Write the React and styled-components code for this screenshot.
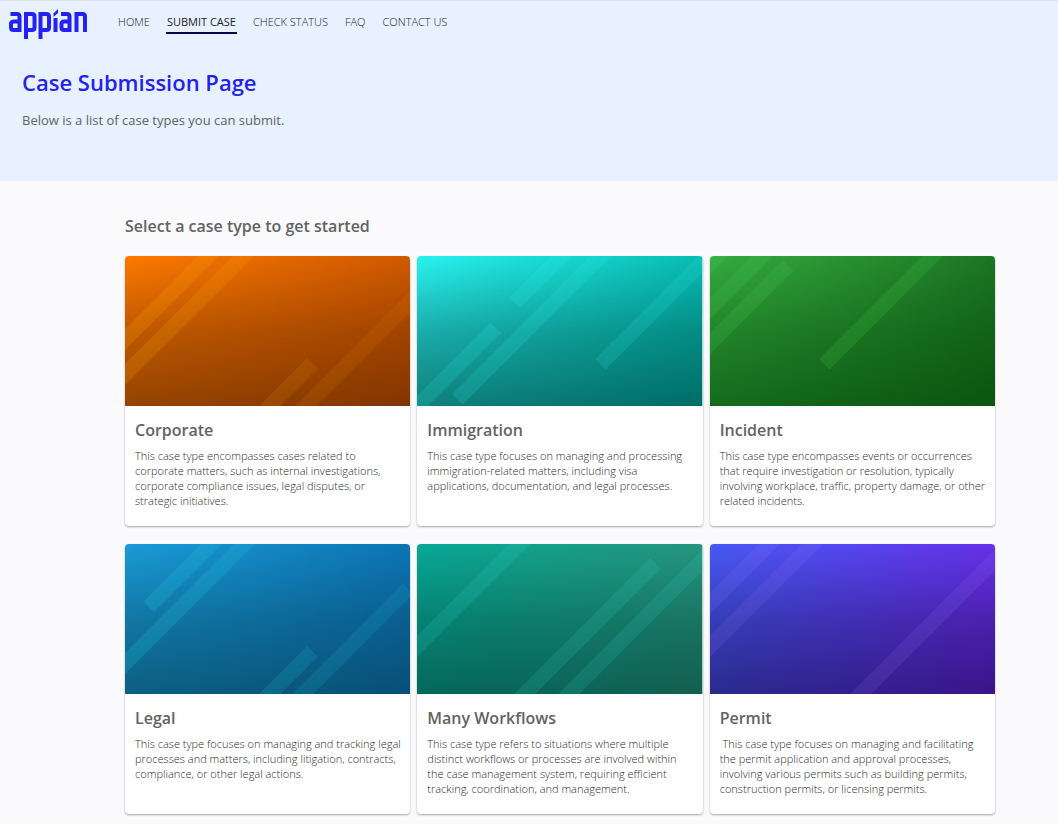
import React, { useId } from "react";
import styled, { createGlobalStyle } from "styled-components";

const GlobalStyle = createGlobalStyle`
  *, *::before, *::after { box-sizing: border-box; }
  body {
    margin: 0;
    background: #fafafc;
    color: #636363;
    font-family: "Open Sans", "Noto Sans", sans-serif;
  }
`;

const Banner = styled.header`
  min-height: 181px;
  padding-bottom: 48px;
  border-top: 1px solid #dfe3e6;
  background: #e7f1ff;
`;

const TopBar = styled.div`
  display: flex;
  align-items: flex-start;
  padding: 8px 8px 0;
`;

const LogoLink = styled.a`
  display: block;
  width: 80px;
  height: 32px;
  svg { display: block; }
`;

const Nav = styled.nav`
  display: flex;
  gap: 15px;
  padding: 5px 0 0 29px;
`;

const NavLink = styled.a`
  padding: 0 1px 2px;
  border-bottom: 2px solid ${(p) => (p.$active ? "#06064f" : "transparent")};
  color: ${(p) => (p.$active ? "#1c1c1c" : "#222222")};
  font-size: 11px;
  font-weight: ${(p) => (p.$active ? 400 : 300)};
  line-height: 16px;
  text-decoration: none;
  white-space: nowrap;
`;

const Intro = styled.div`
  padding: 25px 22px 0;
`;

const PageTitle = styled.h1`
  margin: 0;
  color: #2322f0;
  font-size: 22px;
  font-weight: 600;
  line-height: 32px;
`;

const Lead = styled.p`
  margin: 12px 0 0;
  font-size: 13px;
  line-height: 20px;
`;

const Main = styled.main`
  padding: 34px 63px 10px 125px;
`;

const SectionTitle = styled.h2`
  margin: 0 0 19px;
  font-size: 16px;
  font-weight: 600;
  line-height: 22px;
`;

const CardGrid = styled.div`
  display: grid;
  grid-template-columns: repeat(3, minmax(0, 1fr));
  gap: 18px 7px;
`;

const Card = styled.a`
  display: block;
  min-height: 270px;
  overflow: hidden;
  border-radius: 4px;
  background: #ffffff;
  box-shadow: 0 1px 2px rgba(0, 0, 0, 0.34);
  color: inherit;
  text-decoration: none;
`;

const Art = styled.svg`
  display: block;
  width: 100%;
  height: 150px;
`;

const CardBody = styled.div`
  padding: 13px 8px 18px 10px;
`;

const CardTitle = styled.h3`
  margin: 0;
  font-size: 16px;
  font-weight: 600;
  line-height: 22px;
`;

const CardText = styled.p`
  margin: 7px 0 0;
  color: #2c2c2c;
  font-size: 11px;
  font-weight: 300;
  line-height: 15px;
  white-space: pre-wrap;
`;

const FAR = 500;

const cases = [
  {
    title: "Corporate",
    text: "This case type encompasses cases related to corporate matters, such as internal investigations, corporate compliance issues, legal disputes, or strategic initiatives.",
    corners: ["#ff7a00", "#d05a00", "#944300", "#823500"],
    bar: "#ffa800",
    bars: [[73, -FAR, FAR], [108, -FAR, FAR], [320, -FAR, FAR], [284, -FAR, 80]],
    strength: [0.2, 0.08],
  },
  {
    title: "Immigration",
    text: "This case type focuses on managing and processing immigration-related matters, including visa applications, documentation, and legal processes.",
    corners: ["#2af3f0", "#08bdb4", "#107f7c", "#006c66"],
    bar: "#28f5ee",
    bars: [[134, 51, FAR], [173, -103, FAR], [140, -FAR, 7], [281, 75, FAR]],
    strength: [0.16, 0.14],
  },
  {
    title: "Incident",
    text: "This case type encompasses events or occurrences that require investigation or resolution, typically involving workplace, traffic, property damage, or other related incidents.",
    corners: ["#36ab41", "#1d7623", "#156b1c", "#0a5510"],
    bar: "#48d850",
    bars: [[-3, -FAR, FAR], [42, -FAR, FAR], [77, -FAR, 69], [212, 6, FAR]],
    strength: [0.16, 0.16],
  },
  {
    title: "Legal",
    text: "This case type focuses on managing and tracking legal processes and matters, including litigation, contracts, compliance, or other legal actions.",
    corners: ["#1a9cd8", "#0d75b5", "#0c5f82", "#084f76"],
    bar: "#20c8e0",
    bars: [[76, -39, FAR], [109, -FAR, FAR], [284, -FAR, 80], [317, -FAR, 238]],
    strength: [0.22, 0.12],
  },
  {
    title: "Many Workflows",
    text: "This case type refers to situations where multiple distinct workflows or processes are involved within the case management system, requiring efficient tracking, coordination, and management.",
    corners: ["#08aa96", "#26967e", "#04685c", "#135e50"],
    bar: "#30d8d0",
    bars: [[92, -FAR, FAR], [247, -FAR, 219], [291, -FAR, FAR]],
    strength: [0.16, 0.14],
  },
  {
    title: "Permit",
    text: " This case type focuses on managing and facilitating the permit application and approval processes, involving various permits such as building permits, construction permits, or licensing permits.",
    corners: ["#485af6", "#6632ea", "#2a2b8e", "#3a1488"],
    bar: "#a080ff",
    bars: [[49, -FAR, FAR], [92, -FAR, FAR], [290, -FAR, FAR]],
    strength: [0.12, 0.12],
  },
];

/* A stripe runs along x + y = sum; start and end are values of x - y. */
function stripe([sum, start, end]) {
  const at = (s, d) => `${(s + d) / 2},${(s - d) / 2}`;
  const far = sum + 21;
  return [at(sum, start), at(sum, end), at(far, end), at(far, start)].join(" ");
}

function CaseArt({ corners, bar, bars, strength }) {
  const id = useId();
  return (
    <Art viewBox="0 0 285 150" preserveAspectRatio="xMidYMid slice" aria-hidden="true">
      <defs>
        <linearGradient id={id + "t"}>
          <stop offset="0" stopColor={corners[0]} />
          <stop offset="1" stopColor={corners[1]} />
        </linearGradient>
        <linearGradient id={id + "b"}>
          <stop offset="0" stopColor={corners[2]} />
          <stop offset="1" stopColor={corners[3]} />
        </linearGradient>
        <linearGradient id={id + "f"} x1="0" y1="0" x2="0" y2="1">
          <stop offset="0" stopColor="#fff" stopOpacity="0" />
          <stop offset="0.5" stopColor="#fff" stopOpacity="0.6" />
          <stop offset="1" stopColor="#fff" stopOpacity="1" />
        </linearGradient>
        <linearGradient id={id + "s"} gradientUnits="userSpaceOnUse" x1="40" y1="20" x2="245" y2="130">
          <stop offset="0" stopColor={bar} stopOpacity={strength[0]} />
          <stop offset="1" stopColor={bar} stopOpacity={strength[1]} />
        </linearGradient>
        <mask id={id + "m"}>
          <rect width="285" height="150" fill={`url(#${id}f)`} />
        </mask>
      </defs>
      <rect width="285" height="150" fill={`url(#${id}t)`} />
      <rect width="285" height="150" fill={`url(#${id}b)`} mask={`url(#${id}m)`} />
      {bars.map((b) => (
        <polygon key={b[0]} points={stripe(b)} fill={`url(#${id}s)`} />
      ))}
    </Art>
  );
}

function Logo() {
  return (
    <svg width="80" height="32" viewBox="0 0 80 32" fill="none" stroke="#2322f0" strokeWidth="4">
      <path d="M2.5 5H9Q11.5 5 11.5 7.5V23M11.5 12.5H6Q3 12.5 3 15V18.5Q3 21 5.5 21H11" />
      <path d="M18 30V5H24Q26.5 5 26.5 7.5V18.5Q26.5 21 24 21H20" />
      <path d="M32.5 30V5H38.5Q41 5 41 7.5V18.5Q41 21 38.5 21H34" />
      <path d="M47.5 23V9" />
      <path d="M45.5 8V4.5L50 0V4Z" fill="#2322f0" stroke="none" />
      <path d="M53 5H59Q61.5 5 61.5 7.5V23M61.5 12.5H56Q53.5 12.5 53.5 15V18.5Q53.5 21 56 21H61" />
      <path d="M68.5 23V5H74.5Q77 5 77 7.5V23" />
    </svg>
  );
}

const navItems = ["HOME", "SUBMIT CASE", "CHECK STATUS", "FAQ", "CONTACT US"];

export default function App() {
  return (
    <>
      <GlobalStyle />
      <Banner>
        <TopBar>
          <LogoLink href="#home" aria-label="appian">
            <Logo />
          </LogoLink>
          <Nav>
            {navItems.map((item) => {
              const active = item === "SUBMIT CASE";
              return (
                <NavLink key={item} href="#" $active={active} aria-current={active ? "page" : undefined}>
                  {item}
                </NavLink>
              );
            })}
          </Nav>
        </TopBar>
        <Intro>
          <PageTitle>Case Submission Page</PageTitle>
          <Lead>Below is a list of case types you can submit.</Lead>
        </Intro>
      </Banner>
      <Main>
        <SectionTitle>Select a case type to get started</SectionTitle>
        <CardGrid>
          {cases.map((c) => (
            <Card key={c.title} href="#">
              <CaseArt corners={c.corners} bar={c.bar} bars={c.bars} strength={c.strength} />
              <CardBody>
                <CardTitle>{c.title}</CardTitle>
                <CardText>{c.text}</CardText>
              </CardBody>
            </Card>
          ))}
        </CardGrid>
      </Main>
    </>
  );
}
